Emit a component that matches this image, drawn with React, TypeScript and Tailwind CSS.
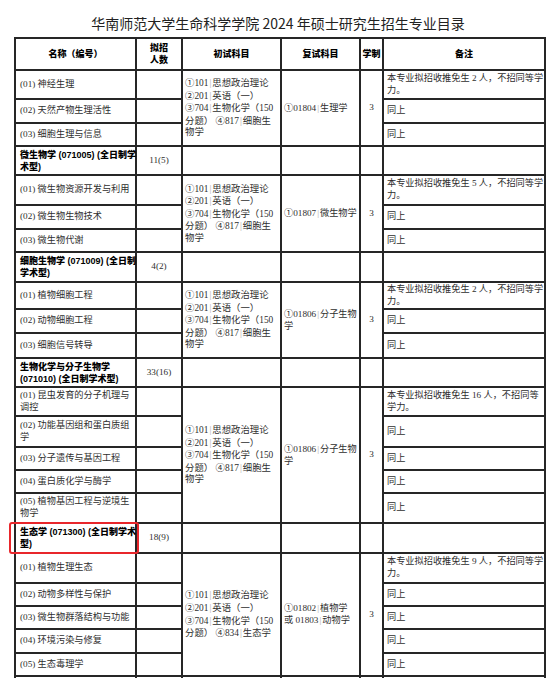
import React from "react";

type Header = { name: string[]; count: string; h: number };
type Group = {
  header?: Header;
  rows: { name: string[]; h: number }[];
  exam: string[];
  retest: string[];
  note: string[];
};

const examA = ["①101|思想政治理论", "②201|英语（一）", "③704|生物化学（150", "分题） ④817|细胞生", "物学"];

const groups: Group[] = [
  {
    rows: [
      { name: ["(01) 神经生理"], h: 29 },
      { name: ["(02) 天然产物生理活性"], h: 24 },
      { name: ["(03) 细胞生理与信息"], h: 23 },
    ],
    exam: examA,
    retest: ["①01804|生理学"],
    note: ["本专业拟招收推免生 2 人，不招同等学", "力。"],
  },
  {
    header: { name: ["微生物学 (071005) (全日制学", "术型)"], count: "11(5)", h: 29 },
    rows: [
      { name: ["(01) 微生物资源开发与利用"], h: 30 },
      { name: ["(02) 微生物生物技术"], h: 24 },
      { name: ["(03) 微生物代谢"], h: 23 },
    ],
    exam: examA,
    retest: ["①01807|微生物学"],
    note: ["本专业拟招收推免生 5 人，不招同等学", "力。"],
  },
  {
    header: { name: ["细胞生物学 (071009) (全日制", "学术型)"], count: "4(2)", h: 30 },
    rows: [
      { name: ["(01) 植物细胞工程"], h: 27 },
      { name: ["(02) 动物细胞工程"], h: 24 },
      { name: ["(03) 细胞信号转导"], h: 25 },
    ],
    exam: examA,
    retest: ["①01806|分子生物", "学"],
    note: ["本专业拟招收推免生 2 人，不招同等学", "力。"],
  },
  {
    header: { name: ["生物化学与分子生物学", "(071010) (全日制学术型)"], count: "33(16)", h: 29 },
    rows: [
      { name: ["(01) 昆虫发育的分子机理与", "调控"], h: 29 },
      { name: ["(02) 功能基因组和蛋白质组", "学"], h: 31 },
      { name: ["(03) 分子遗传与基因工程"], h: 23 },
      { name: ["(04) 蛋白质化学与酶学"], h: 23 },
      { name: ["(05) 植物基因工程与逆境生", "物学"], h: 30 },
    ],
    exam: examA,
    retest: ["①01806|分子生物", "学"],
    note: ["本专业拟招收推免生 16 人，不招同等", "学力。"],
  },
  {
    header: { name: ["生态学 (071300) (全日制学术", "型)"], count: "18(9)", h: 30 },
    rows: [
      { name: ["(01) 植物生理生态"], h: 30 },
      { name: ["(02) 动物多样性与保护"], h: 23 },
      { name: ["(03) 微生物群落结构与功能"], h: 23 },
      { name: ["(04) 环境污染与修复"], h: 24 },
      { name: ["(05) 生态毒理学"], h: 23 },
    ],
    exam: ["①101|思想政治理论", "②201|英语（一）", "③704|生物化学（150", "分题） ④834|生态学"],
    retest: ["①01802|植物学", "或 01803|动物学"],
    note: ["本专业拟招收推免生 9 人，不招同等学", "力。"],
  },
];

const cell = "border-2 border-[#262626] align-middle";
const body = "font-['Liberation_Serif','Noto_Sans_CJK_SC',serif] text-[9.2px] leading-[11.6px] text-[#2e2e2e]";
const bold = "font-['Liberation_Sans','Noto_Sans_CJK_SC',sans-serif] font-black text-[9px] leading-[12px] text-black";

// circled digits look better from the CJK font
function Part({ text }: { text: string }) {
  return (
    <>
      {text.split(/([①②③④])/).map((s, k) =>
        /[①②③④]/.test(s) ? (
          <span key={k} className="font-['Noto_Sans_CJK_SC',sans-serif]">
            {s}
          </span>
        ) : (
          s
        )
      )}
    </>
  );
}

function Lines({ lines }: { lines: string[] }) {
  return (
    <>
      {lines.map((l, i) => (
        <div key={i} className="whitespace-nowrap">
          {l.split("|").map((p, j) => (
            <React.Fragment key={j}>
              {j > 0 && <span className="text-[#aaa] mx-[1px]">|</span>}
              <Part text={p} />
            </React.Fragment>
          ))}
        </div>
      ))}
    </>
  );
}

function GroupRows({ g, marked }: { g: Group; marked: boolean }) {
  const n = g.rows.length;
  return (
    <>
      {g.header && (
        <tr style={{ height: g.header.h }}>
          <td className={`${cell} ${bold} px-[4px] relative`}>
            <Lines lines={g.header.name} />
            {marked && (
              <div className="absolute left-[-7px] right-[-4px] top-[-2px] bottom-[-2px] border-[2.5px] border-[#e8262b] rounded-[3px]" />
            )}
          </td>
          <td className={`${cell} ${body} text-center`}>{g.header.count}</td>
          <td className={cell} />
          <td className={cell} />
          <td className={cell} />
          <td className={cell} />
        </tr>
      )}
      {g.rows.map((r, i) => (
        <tr key={i} style={{ height: r.h }}>
          <td className={`${cell} ${body} px-[4px]`}>
            <Lines lines={r.name} />
          </td>
          <td className={cell} />
          {i === 0 && (
            <>
              <td rowSpan={n} className={`${cell} ${body} text-[9.4px] px-[2px]`}>
                <Lines lines={g.exam} />
              </td>
              <td rowSpan={n} className={`${cell} ${body} px-[2px]`}>
                <Lines lines={g.retest} />
              </td>
              <td rowSpan={n} className={`${cell} ${body} text-center`}>3</td>
            </>
          )}
          <td className={`${cell} ${body} px-[3px]`}>
            <Lines lines={i === 0 ? g.note : ["同上"]} />
          </td>
        </tr>
      ))}
    </>
  );
}

export default function App() {
  return (
    <div className="w-[554px] h-[678px] overflow-hidden bg-white">
      <h1 className="h-[37px] pt-[13px] text-center font-['Noto_Sans_CJK_SC',sans-serif] text-[14px] leading-[20px] text-[#222] pl-[2px]">
        华南师范大学生命科学学院 2024 年硕士研究生招生专业目录
      </h1>
      <table className="ml-[14px] w-[530px] table-fixed border-collapse">
        <colgroup>
          <col className="w-[121px]" />
          <col className="w-[46px]" />
          <col className="w-[99px]" />
          <col className="w-[79px]" />
          <col className="w-[23px]" />
          <col className="w-[162px]" />
        </colgroup>
        <thead>
          <tr className="h-[32px]">
            {["名称（编号）", "拟招\n人数", "初试科目", "复试科目", "学制", "备注"].map((t) => (
              <th key={t} className={`${cell} ${bold} text-center whitespace-pre-line leading-[11px]`}>
                {t}
              </th>
            ))}
          </tr>
        </thead>
        <tbody>
          {groups.map((g, i) => (
            <GroupRows key={i} g={g} marked={i === 4} />
          ))}
          <tr className="h-[24px]">
            <td className={cell} />
            <td className={cell} />
            <td className={cell} />
            <td className={cell} />
            <td className={cell} />
            <td className={cell} />
          </tr>
        </tbody>
      </table>
    </div>
  );
}
